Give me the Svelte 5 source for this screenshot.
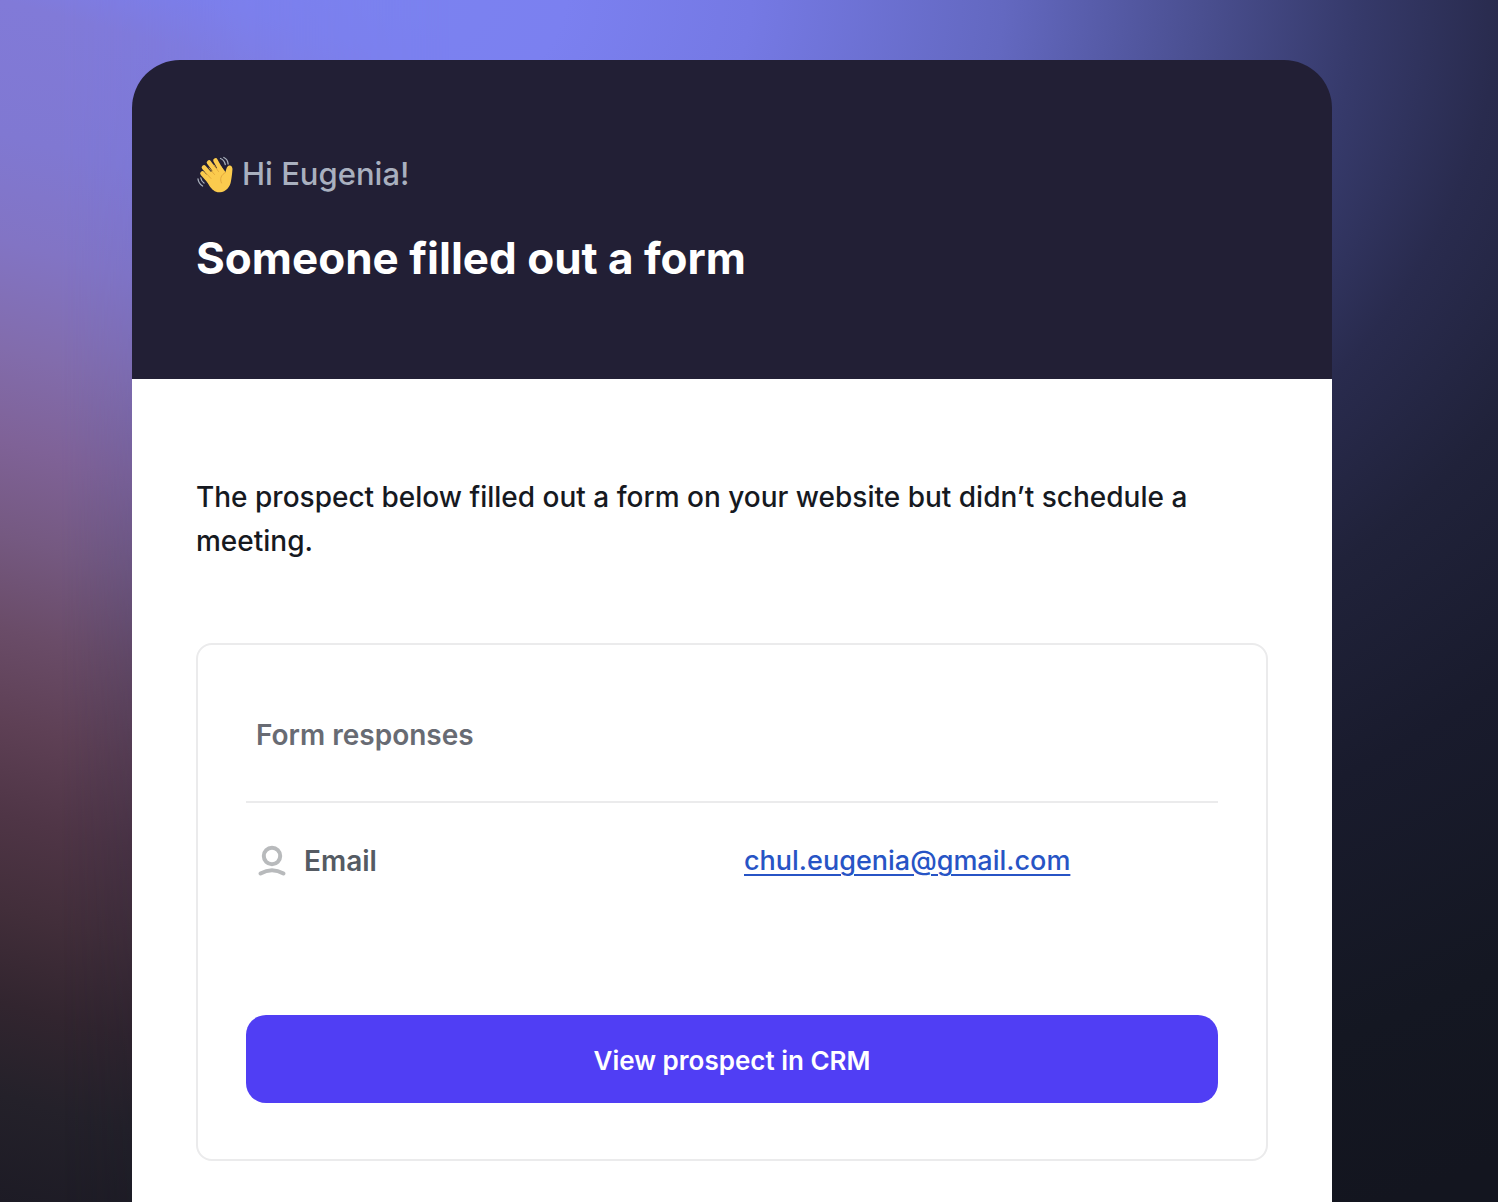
<script>
  const responses = [{ label: 'Email', value: 'chul.eugenia@gmail.com' }];
</script>

<div class="page">
  <main class="card">
    <header class="hero">
      <p class="greeting">
        <svg class="wave" viewBox="0 0 38 40" aria-hidden="true">
          <g fill="none" stroke="#a9b0bc" stroke-width="1.3" stroke-linecap="round">
            <path d="M2 25q.6 4.400 4.600 7" />
            <path d="M4.800 24q.5 3 3.200 5" />
            <path d="M24.500 4.500q3.800 1.500 4.800 6" />
            <path d="M27.800 3.500q4 1.800 4.300 6.500" />
          </g>
          <g fill="none" stroke="#fbcb4e" stroke-width="4.6" stroke-linecap="round">
            <path d="M6.500 19.500L15 29" />
            <path d="M8 13.500L19 26" />
            <path d="M13 8.500L23 22" />
            <path d="M19.500 6.500L27 20" />
          </g>
          <path fill="#fbcb4e" d="M8 22L25 12l4.500 6c.8-2 .8-5.500 3.500-6.500 2.200-.6 3.300 1.200 3.500 3.500-.4 5-.8 8-1.500 12-.8 6-5 10.800-11 11.300-5 .4-8-3-10.500-6.300z" />
          <g fill="none" stroke="#e0a53a" stroke-width=".9" stroke-linecap="round">
            <path d="M9.500 18.500l5.500 6M13 14l5.500 6.500M18 11l4.500 6.500" />
            <path d="M29.500 18.500c-4.500 2.500-6 6-4 10.500" />
          </g>
        </svg>
        <span>Hi Eugenia!</span>
      </p>
      <h1>Someone filled out a form</h1>
    </header>

    <div class="content">
      <p class="intro">The prospect below filled out a form on your website but didn’t schedule a meeting.</p>

      <section class="panel">
        <table>
          <thead>
            <tr><th colspan="2">Form responses</th></tr>
          </thead>
          <tbody>
            {#each responses as item}
              <tr>
                <th scope="row">
                  <span class="label">
                    <svg class="person" viewBox="0 0 32 36" aria-hidden="true">
                      <circle cx="16" cy="13" r="8.200" />
                      <path d="M4.500 30.500Q16 24 27.500 30.500" />
                    </svg>
                    {item.label}
                  </span>
                </th>
                <td><a href="mailto:{item.value}">{item.value}</a></td>
              </tr>
            {/each}
          </tbody>
        </table>
        <button type="button">View prospect in CRM</button>
      </section>
    </div>
  </main>
</div>

<style>
  :global(body) {
    margin: 0;
  }

  .page {
    position: relative;
    box-sizing: border-box;
    display: flex;
    min-height: 100vh;
    padding: 60px 11% 0 132px;
    font-family: Inter, 'Liberation Sans', sans-serif;
    background: radial-gradient(
      1098px 718px at 400px 0,
      #7b82f0 0%,
      #7b80f0 15%,
      #7579e4 32%,
      #6368c0 55%,
      #4a4f90 73%,
      #363a6b 87%,
      #292b4e 100%,
      #20223a 116%,
      #191b2d 138%,
      #141722 168%,
      #13151f 190%
    );
  }

  .page::before {
    content: '';
    position: absolute;
    inset: 0 auto 0 0;
    width: 500px;
    background: linear-gradient(
      195deg,
      #7b82f0 0%,
      #7d7ee8 6%,
      #817ad8 10%,
      #8078d2 20%,
      #8274c4 28%,
      #826cac 36%,
      #7f6297 43%,
      #755981 50%,
      #6a4c68 57%,
      #5e4055 64%,
      #4f3546 71%,
      #422e3a 78%,
      #32252f 85%,
      #24212a 92%,
      #1d1b25 100%
    );
    mask-image: linear-gradient(to right, #000 12%, transparent 90%);
  }

  .card {
    position: relative;
    display: flex;
    flex: 1;
    flex-direction: column;
    max-width: 1200px;
  }

  .hero {
    padding: 92px 64px 91px;
    border-radius: 48px 48px 0 0;
    background: #221f35;
  }

  .greeting {
    display: flex;
    align-items: center;
    gap: 8px;
    margin: 0;
    color: #a9b0bf;
    font-size: 31px;
    font-weight: 500;
    line-height: 44px;
  }

  .wave {
    width: 38px;
    height: 40px;
  }

  h1 {
    margin: 32px 0 0;
    color: #fff;
    font-size: 44px;
    font-weight: 700;
    line-height: 60px;
  }

  .content {
    flex: 1;
    padding: 96px 64px 41px;
    background: #fff;
  }

  .intro {
    margin: 0;
    color: #16191f;
    font-size: 28px;
    font-weight: 500;
    line-height: 44px;
  }

  .panel {
    margin-top: 80px;
    padding: 48px 48px 56px;
    border: 2px solid #ebebec;
    border-radius: 16px;
  }

  table {
    width: 100%;
    border-collapse: collapse;
    table-layout: fixed;
    text-align: left;
    font-size: 28px;
    line-height: 44px;
  }

  th,
  td {
    padding: 36px 10px 44px;
    font-weight: 500;
  }

  td {
    padding-left: 12px;
    font-size: 27px;
  }

  thead th {
    padding: 20px 10px 44px;
    border-bottom: 2px solid #ebebec;
    color: #686b73;
    font-weight: 600;
  }

  tbody th {
    color: #555b63;
    font-weight: 600;
  }

  .label {
    display: flex;
    align-items: center;
    gap: 16px;
  }

  .person {
    width: 32px;
    height: 36px;
    fill: none;
    stroke: #b8babc;
    stroke-width: 4;
    stroke-linecap: round;
  }

  a {
    color: #2754c5;
    text-decoration-thickness: 2px;
    text-underline-offset: 4px;
  }

  button {
    display: block;
    width: 100%;
    height: 88px;
    margin-top: 88px;
    padding: 4px 0 0;
    border: 0;
    border-radius: 20px;
    background: #503ef4;
    color: #fff;
    font: 600 26px/44px Inter, 'Liberation Sans', sans-serif;
    cursor: pointer;
  }
</style>
